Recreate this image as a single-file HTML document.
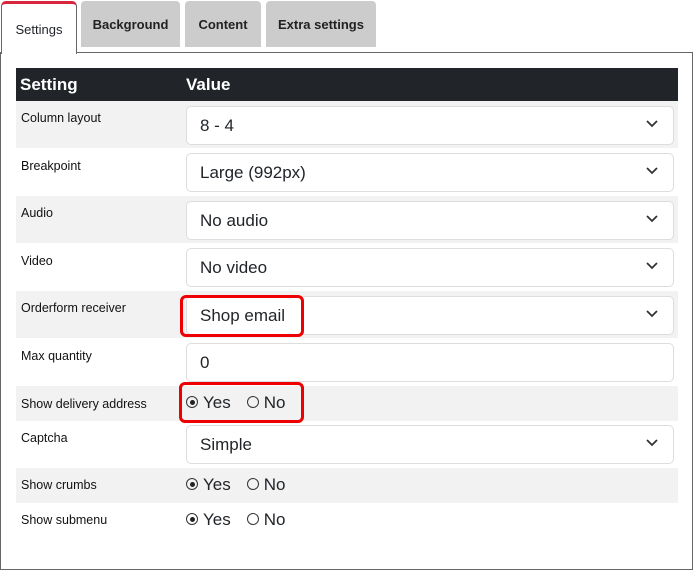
<!DOCTYPE html><html><head><style>
body{margin:0;width:694px;height:570px;background:#fff;font-family:"Liberation Sans",sans-serif;position:relative;overflow:hidden;color:#212529}
.a{position:absolute;box-sizing:border-box}
.tab{background:#ccc;border-radius:4px 4px 0 0;top:1px;height:46px;font-size:13px;font-weight:bold;text-align:center;line-height:48px;color:#222}
.row{left:16px;width:662px}
.g{background:#f2f2f2}
.lab{left:21px;font-size:12.5px;color:#111}
.sel{left:186px;width:488px;height:39px;border:1px solid #ddd;border-radius:5px;background:#fff;font-size:17px;padding-left:13px;line-height:37px}
.chev{position:absolute;right:15px;top:13px}
.red{border:3px solid #e00;border-radius:6px}
.rad{font-size:17px;left:186px}
.c{display:inline-block;width:12px;height:12px;border:1px solid #333;border-radius:50%;box-sizing:border-box;position:relative;top:0px;margin-right:5px}
.c.on::after{content:"";position:absolute;left:2.5px;top:2.5px;width:5px;height:5px;border-radius:50%;background:#222}
</style></head><body>
<div class="a" style="left:0;top:52px;width:693px;height:518px;border:1px solid #666"></div>
<div class="a" style="left:1px;top:1px;width:76px;height:53px;background:#fff;border:1px solid #666;border-bottom:none;border-top:3px solid #d9263c;border-radius:5px 5px 0 0;font-size:13px;text-align:center;line-height:52px">Settings</div>
<div class="a tab" style="left:81px;width:99px">Background</div>
<div class="a tab" style="left:185px;width:76px">Content</div>
<div class="a tab" style="left:266px;width:110px">Extra settings</div>
<div class="a row" style="top:68px;height:33px;background:#212529;color:#fff;font-weight:bold;font-size:17px;line-height:34px"><span style="margin-left:4px">Setting</span><span style="position:absolute;left:170px">Value</span></div>
<div class="a row g" style="top:101px;height:47px"></div>
<div class="a row g" style="top:196px;height:47px"></div>
<div class="a row g" style="top:291px;height:47px"></div>
<div class="a row g" style="top:386px;height:35px"></div>
<div class="a row g" style="top:468px;height:35px"></div>
<div class="a lab" style="top:111px">Column layout</div>
<div class="a lab" style="top:159px">Breakpoint</div>
<div class="a lab" style="top:206px">Audio</div>
<div class="a lab" style="top:254px">Video</div>
<div class="a lab" style="top:301px">Orderform receiver</div>
<div class="a lab" style="top:349px">Max quantity</div>
<div class="a lab" style="top:397px">Show delivery address</div>
<div class="a lab" style="top:431px">Captcha</div>
<div class="a lab" style="top:478px">Show crumbs</div>
<div class="a lab" style="top:513px">Show submenu</div>
<div class="a sel" style="top:106px">8 - 4<svg class="chev" width="12" height="8"><path d="M1 1l5 5 5-5" fill="none" stroke="#333" stroke-width="1.8"/></svg></div>
<div class="a sel" style="top:153px">Large (992px)<svg class="chev" width="12" height="8"><path d="M1 1l5 5 5-5" fill="none" stroke="#333" stroke-width="1.8"/></svg></div>
<div class="a sel" style="top:201px">No audio<svg class="chev" width="12" height="8"><path d="M1 1l5 5 5-5" fill="none" stroke="#333" stroke-width="1.8"/></svg></div>
<div class="a sel" style="top:248px">No video<svg class="chev" width="12" height="8"><path d="M1 1l5 5 5-5" fill="none" stroke="#333" stroke-width="1.8"/></svg></div>
<div class="a sel" style="top:296px">Shop email<svg class="chev" width="12" height="8"><path d="M1 1l5 5 5-5" fill="none" stroke="#333" stroke-width="1.8"/></svg></div>
<div class="a sel" style="top:343px">0</div>
<div class="a sel" style="top:425px">Simple<svg class="chev" width="12" height="8"><path d="M1 1l5 5 5-5" fill="none" stroke="#333" stroke-width="1.8"/></svg></div>
<div class="a red" style="left:180px;top:295px;width:124px;height:42px"></div>
<div class="a red" style="left:179px;top:382px;width:125px;height:41px"></div>
<div class="a rad" style="top:393px"><span class="c on"></span>Yes<span style="display:inline-block;width:16px"></span><span class="c"></span>No</div>
<div class="a rad" style="top:475px"><span class="c on"></span>Yes<span style="display:inline-block;width:16px"></span><span class="c"></span>No</div>
<div class="a rad" style="top:510px"><span class="c on"></span>Yes<span style="display:inline-block;width:16px"></span><span class="c"></span>No</div>
</body></html>
